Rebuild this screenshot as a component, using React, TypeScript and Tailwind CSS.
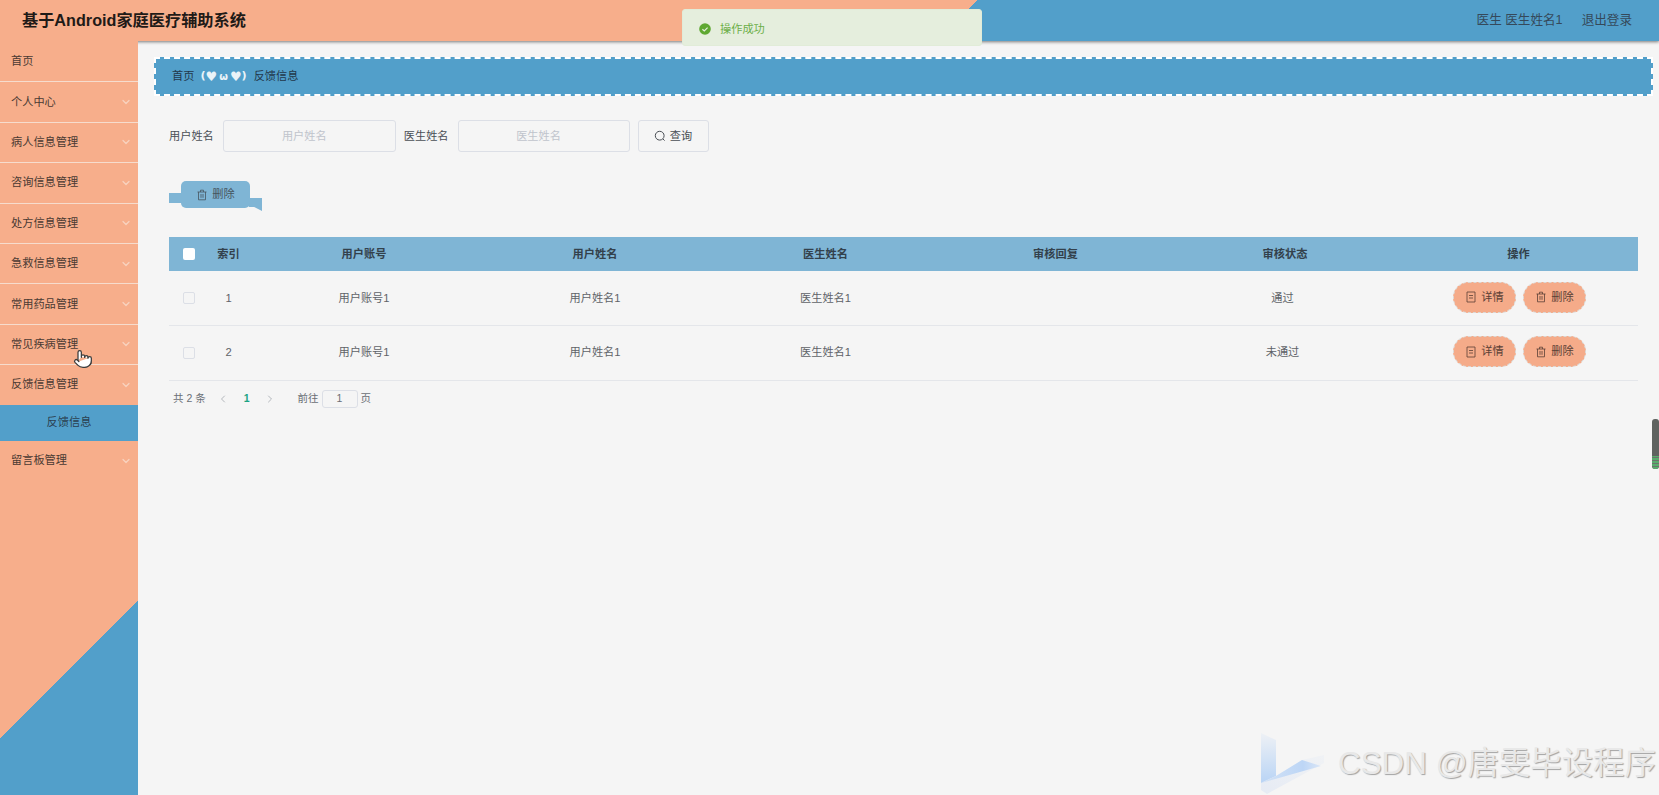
import { ChevronDown, ChevronLeft, ChevronRight, Pointer } from "lucide-react";

const menu = ["个人中心", "病人信息管理", "咨询信息管理", "处方信息管理", "急救信息管理", "常用药品管理", "常见疾病管理", "反馈信息管理"];

const rows = [
  { id: 1, status: "通过" },
  { id: 2, status: "未通过" },
];

const columns = ["用户账号", "用户姓名", "医生姓名", "审核回复"];

function DeleteIcon() {
  return (
    <svg viewBox="0 0 12 12" fill="none" stroke="currentColor" strokeWidth="0.8" className="h-3 w-3 shrink-0">
      <path d="M1.5 3h9M4.5 3V1.2h3V3M2.5 3v7.8h7V3M5 5v3.8M7 5v3.8" />
    </svg>
  );
}

function DetailIcon() {
  return (
    <svg viewBox="0 0 12 12" fill="none" stroke="currentColor" strokeWidth="0.8" className="h-3 w-3 shrink-0">
      <path d="M2 1h8v10H2zM4 4.5h4M4 7h4" />
    </svg>
  );
}

function MenuItem({ label, arrow = true, line = true }: { label: string; arrow?: boolean; line?: boolean }) {
  return (
    <div className={`flex h-[40.4px] items-center justify-between pl-[11px] pr-[6px] text-[11.2px] text-[#4a3a33] ${line ? "border-b border-[#f6dccd]" : ""}`}>
      <span>{label}</span>
      {arrow && <ChevronDown className="h-3 w-3 text-[#f8d3c0]" strokeWidth={2.4} />}
    </div>
  );
}

function RowButton({ label, icon }: { label: string; icon: "detail" | "delete" }) {
  return (
    <button className="flex h-[31px] w-[63px] items-center justify-center gap-1 rounded-full border border-dashed border-[#dcd8d4] bg-[#f5ab89] text-[11.2px] text-[#5a4036]">
      {icon === "detail" ? <DetailIcon /> : <DeleteIcon />}
      {label}
    </button>
  );
}

export default function App() {
  return (
    <div className="relative flex h-[795px] w-[1659px] flex-col overflow-hidden bg-[#f5f5f5] font-['Liberation_Sans','Noto_Sans_CJK_SC',sans-serif]">
      {/* Header */}
      <header className="flex h-[41px] shrink-0 items-center justify-between bg-[linear-gradient(135deg,#f7ae8b_691px,#529fca_691px)] pl-[22px] pr-[27px] shadow-[0_1px_3px_rgba(0,0,0,0.5)]">
        <h1 className="text-[16.2px] font-bold text-[#1f1a17]">基于Android家庭医疗辅助系统</h1>
        <div className="flex gap-[19px] text-[12.6px] text-[#35495a]">
          <span>医生 医生姓名1</span>
          <span>退出登录</span>
        </div>
      </header>

      <div className="flex flex-1">
        {/* Sidebar */}
        <aside className="w-[138px] shrink-0 bg-[linear-gradient(135deg,#f7ae8b_493px,#529fca_493px)] pt-px">
          <MenuItem label="首页" arrow={false} />
          {menu.map((m) => (
            <MenuItem key={m} label={m} />
          ))}
          <div className="-mt-px flex h-[36px] items-center justify-center bg-[#529fca] text-[11.2px] text-[#2b3f50]">反馈信息</div>
          <MenuItem label="留言板管理" line={false} />
        </aside>

        {/* Main */}
        <main className="flex-1 pl-[16px] pr-[6px] pt-[16px]">
          <div className="flex h-[39px] items-center border-2 border-dashed border-white bg-[#529fca] pl-[16px] text-[11.2px] text-[#23384a]">
            <span>首页</span>
            <span className="ml-[6px] flex items-center font-['DejaVu_Sans',sans-serif] font-bold text-[#eaf3f8]">
              (<span className="text-[13px] leading-none">♥</span>
              <span className="mx-[2px] text-[10px]">ω</span>
              <span className="text-[13px] leading-none">♥</span>)
            </span>
            <span className="ml-[7px]">反馈信息</span>
          </div>

          <div className="pl-[15px] pr-[15px]">
            {/* Search */}
            <div className="mt-[24px] flex h-[32px] items-center text-[11.2px] text-[#4a4f55]">
              <span className="mr-[9px]">用户姓名</span>
              <input placeholder="用户姓名" className="mr-[8px] h-full w-[173px] rounded-[3px] border border-[#dcdfe6] bg-[#f5f5f5] pr-[10px] text-center text-[11.2px] placeholder:text-[#c0c4cc]" />
              <span className="mr-[9px]">医生姓名</span>
              <input placeholder="医生姓名" className="mr-[8px] h-full w-[172px] rounded-[3px] border border-[#dcdfe6] bg-[#f5f5f5] pr-[10px] text-center text-[11.2px] placeholder:text-[#c0c4cc]" />
              <button className="flex h-full w-[71px] items-center justify-center gap-1 rounded-[3px] border border-[#dcdfe6] text-[11.2px] text-[#4a4f55]">
                <svg viewBox="0 0 12 12" fill="none" stroke="currentColor" strokeWidth="1" className="h-3 w-3 shrink-0">
                  <circle cx="5.7" cy="5.7" r="4.4" />
                  <path d="M9 9l1.6 1.6" />
                </svg>
                查询
              </button>
            </div>

            {/* Delete ribbon */}
            <div className="relative ml-[12px] mt-[29px] w-[69px]">
              <span className="absolute left-[-12px] top-[12px] h-[10px] w-[13px] bg-[#7fb5d5]" />
              <span className="absolute right-[-12px] top-[17px] h-[13px] w-[13px] bg-[#7fb5d5] [clip-path:polygon(0_0,100%_0,100%_100%,40%_70%,0_70%)]" />
              <button className="relative flex h-[27px] w-full items-center justify-center gap-1 rounded-[5px] bg-[#7fb5d5] text-[11.2px] text-[#46545e]">
                <DeleteIcon />
                删除
              </button>
            </div>

            {/* Table */}
            <table className="mt-[29px] w-[1469px] table-fixed text-[11.2px] text-[#5f6368]">
              <colgroup>
                <col className="w-[40px]" />
                <col className="w-[39px]" />
                <col className="w-[232px]" />
                <col className="w-[230px]" />
                <col className="w-[231px]" />
                <col className="w-[229px]" />
                <col className="w-[225px]" />
                <col />
              </colgroup>
              <thead>
                <tr className="h-[34px] bg-[#7fb5d5] font-bold text-[#33414c]">
                  <th>
                    <span className="mx-auto block h-3 w-3 rounded-[2px] bg-white" />
                  </th>
                  <th className="font-bold">索引</th>
                  {columns.map((c) => (
                    <th key={c} className="font-bold">{c}</th>
                  ))}
                  <th className="pl-[5px] font-bold">审核状态</th>
                  <th className="pl-[4px] font-bold">操作</th>
                </tr>
              </thead>
              <tbody>
                {rows.map((r) => (
                  <tr key={r.id} className="h-[54.5px] border-b border-[#e4e6ea] text-center">
                    <td>
                      <span className="mx-auto block h-3 w-3 rounded-[2px] border border-[#dcdfe6]" />
                    </td>
                    <td>{r.id}</td>
                    <td>用户账号1</td>
                    <td>用户姓名1</td>
                    <td>医生姓名1</td>
                    <td></td>
                    <td>{r.status}</td>
                    <td className="pl-[6px]">
                      <div className="mb-[2px] flex justify-center gap-[7px]">
                        <RowButton label="详情" icon="detail" />
                        <RowButton label="删除" icon="delete" />
                      </div>
                    </td>
                  </tr>
                ))}
              </tbody>
            </table>

            {/* Pagination */}
            <div className="mt-[9px] flex h-[18px] items-center pl-[4px] text-[10.5px] text-[#6b7075]">
              <span>共 2 条</span>
              <ChevronLeft className="ml-[11px] h-3 w-3 text-[#b4b8bd]" />
              <span className="ml-[15px] font-bold text-[#1aa383]">1</span>
              <ChevronRight className="ml-[14px] h-3 w-3 text-[#b4b8bd]" />
              <span className="ml-[22px]">前往</span>
              <span className="mx-[3px] flex h-[18px] w-[36px] items-center justify-center rounded-[3px] border border-[#dcdfe6]">1</span>
              <span>页</span>
            </div>
          </div>
        </main>
      </div>

      {/* Toast */}
      <div className="absolute left-[682px] top-[9px] flex h-[37px] w-[300px] items-center gap-[9px] rounded-[3px] border border-[#e1ecd8] bg-[#e5eedd] pl-[16px] pt-[3px] text-[11.2px] text-[#6cae48]">
        <svg viewBox="0 0 12 12" className="h-3 w-3 shrink-0">
          <circle cx="6" cy="6" r="5.8" fill="#5fa832" />
          <path d="M3.4 6.2l1.9 1.8 3.3-3.4" fill="none" stroke="#e5eedd" strokeWidth="1.2" />
        </svg>
        操作成功
      </div>

      {/* Mouse cursor from the recording */}
      <Pointer className="absolute left-[73px] top-[349px] h-5 w-5 fill-white text-[#3b3b3b]" strokeWidth={1.5} />

      {/* Scrollbar overlay */}
      <div className="absolute right-0 top-[419px] flex h-[50px] w-[7px] flex-col justify-end overflow-hidden rounded-[3px] bg-[#5f6360]">
        <div className="h-[13px] bg-[repeating-linear-gradient(0deg,#58ac6c_0px,#58ac6c_2px,#6a736c_2px,#6a736c_3px)]" />
      </div>

      {/* Watermark */}
      <div className="absolute bottom-0 left-[1261px] flex h-[62px] items-center">
        <svg width="64" height="62" viewBox="0 0 64 62" className="shrink-0">
          <defs>
            <linearGradient id="wmBar" x1="0" y1="0" x2="0" y2="1">
              <stop offset="0" stopColor="#eef1f5" />
              <stop offset="1" stopColor="#b9d4f5" />
            </linearGradient>
            <linearGradient id="wmBand" x1="0" y1="1" x2="1" y2="0">
              <stop offset="0" stopColor="#e6ebf4" />
              <stop offset="1" stopColor="#f0f2f5" />
            </linearGradient>
            <linearGradient id="wmWedge" x1="0" y1="0" x2="1" y2="0">
              <stop offset="0" stopColor="#d3e2f5" />
              <stop offset="0.7" stopColor="#bdd6f6" />
              <stop offset="1" stopColor="#dbe6f6" />
            </linearGradient>
          </defs>
          <path d="M15 43 L41 27 L63 22 L63 30 L6 61 L0 57 L0 50 Z" fill="url(#wmBand)" />
          <path d="M0 0 L15 7 L15 43 L0 50 Z" fill="url(#wmBar)" />
          <path d="M15 43 L41 27 L60 33 L0 50 Z" fill="url(#wmWedge)" />
        </svg>
        <span className="ml-[13px] whitespace-nowrap text-[31.4px] text-[#e8e8e8] [text-shadow:1px_1px_1px_#a3a3a3]">CSDN @唐雯毕设程序</span>
      </div>
    </div>
  );
}
